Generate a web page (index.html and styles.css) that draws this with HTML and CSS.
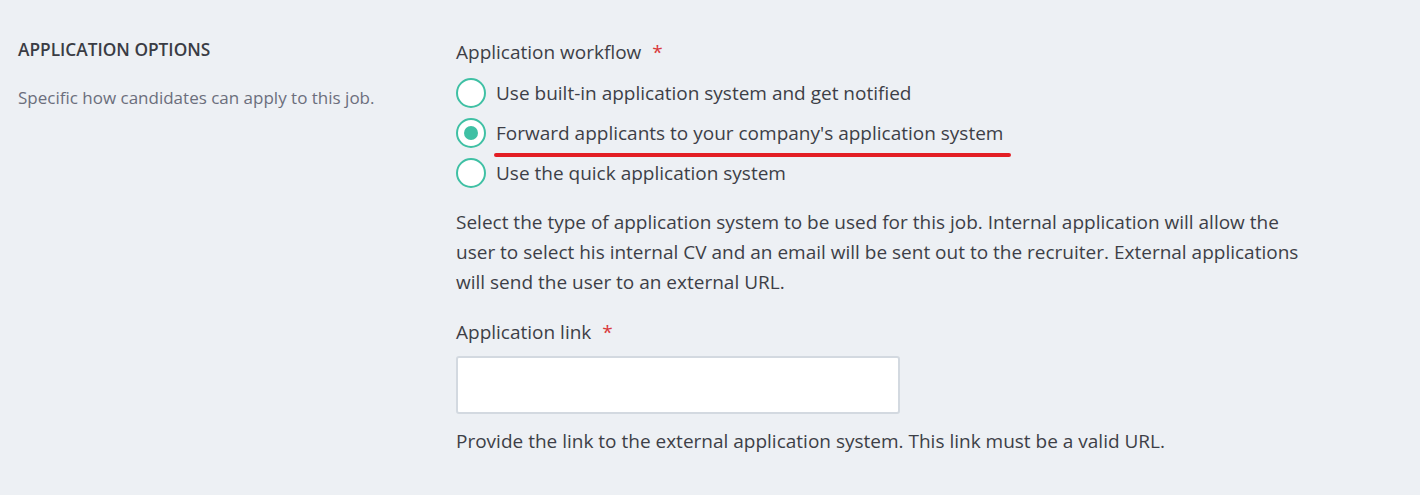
FILE: index.html
```html
<!DOCTYPE html>
<html>
<head>
<meta charset="utf-8">
<link rel="stylesheet" href="styles.css">
</head>
<body>
<div class="section">
  <div class="intro">
    <h2 class="intro-title">APPLICATION OPTIONS</h2>
    <p class="intro-desc">Specific how candidates can apply to this job.</p>
  </div>
  <div class="fields">
    <div class="field">
      <div class="label">Application workflow <span class="req">*</span></div>
      <div class="radios">
        <label class="radio"><span class="dot"></span><span class="radio-text">Use built-in application system and get notified</span></label>
        <label class="radio checked"><span class="dot"></span><span class="radio-text marked">Forward applicants to your company's application system</span></label>
        <label class="radio"><span class="dot"></span><span class="radio-text">Use the quick application system</span></label>
      </div>
      <p class="help">Select the type of application system to be used for this job. Internal application will allow the user to select his internal CV and an email will be sent out to the recruiter. External applications will send the user to an external URL.</p>
    </div>
    <div class="field">
      <div class="label">Application link <span class="req">*</span></div>
      <div class="input"></div>
      <p class="help">Provide the link to the external application system. This link must be a valid URL.</p>
    </div>
  </div>
</div>
</body>
</html>
```
FILE: styles.css
```css
html, body {
  margin: 0;
  padding: 0;
  background: #edf0f4;
}
body {
  font-family: "Open Sans", "Noto Sans", sans-serif;
  color: #3d3f47;
  width: 1420px;
  height: 495px;
  overflow: hidden;
}
.section {
  display: flex;
  padding: 36px 0 0 18px;
}
.intro {
  width: 438px;
  flex: none;
}
.intro-title {
  margin: 0;
  font-size: 17.3px;
  font-weight: 600;
  line-height: 28px;
  color: #3a3c44;
}
.intro-desc {
  margin: 20px 0 0;
  font-size: 17px;
  line-height: 28px;
  color: #6b6e7c;
}
.fields {
  width: 848px;
  font-size: 19px;
}
.label {
  line-height: 32px;
}
.req {
  color: #d9383a;
  margin-left: 6px;
}
.radios {
  display: flex;
  flex-direction: column;
  margin-top: 5px;
}
.radio {
  display: flex;
  align-items: center;
  height: 40px;
}
.dot {
  width: 30px;
  height: 30px;
  box-sizing: border-box;
  border: 2px solid #3fc0a4;
  border-radius: 50%;
  background: #fff;
  margin-right: 10px;
  display: flex;
  align-items: center;
  justify-content: center;
}
.checked .dot::after {
  content: "";
  width: 14px;
  height: 14px;
  border-radius: 50%;
  background: #3fc0a4;
}
.radio-text {
  position: relative;
}
.marked::after {
  content: "";
  position: absolute;
  left: -2px;
  right: -8px;
  bottom: -11px;
  height: 4px;
  border-radius: 2px;
  background: #e31e24;
}
.help {
  margin: 14px 0 0;
  line-height: 30px;
}
.field + .field {
  margin-top: 19px;
}
.input {
  margin-top: 8px;
  width: 444px;
  height: 58px;
  box-sizing: border-box;
  border: 2px solid #d3d9e0;
  border-radius: 3px;
  background: #fff;
}
.field + .field .help {
  margin-top: 12px;
}
```
